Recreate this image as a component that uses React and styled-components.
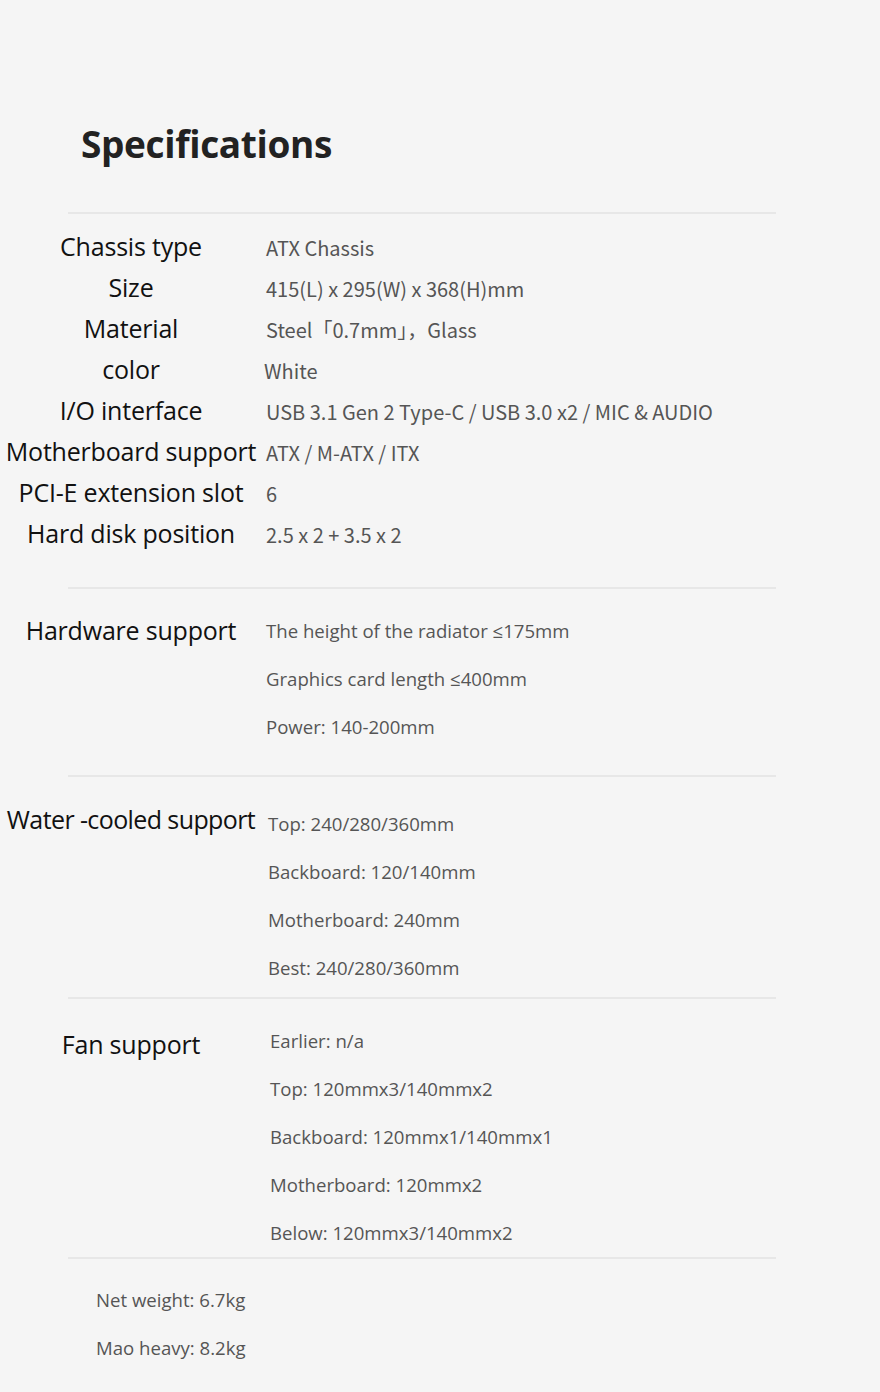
import React from 'react';
import styled, { createGlobalStyle } from 'styled-components';

const GlobalStyle = createGlobalStyle`
  html, body {
    margin: 0;
    padding: 0;
    background: #f5f5f5;
  }
`;

const Page = styled.div`
  width: 880px;
  min-height: 1392px;
  background: #f5f5f5;
  font-family: "Open Sans", "Noto Sans", sans-serif;
  overflow: hidden;
`;

const Title = styled.h1`
  margin: 0;
  padding: 119px 0 0 81px;
  height: 212px;
  box-sizing: border-box;
  font-family: "Open Sans", "Noto Sans", sans-serif;
  font-weight: 700;
  font-size: 37px;
  line-height: 50px;
  letter-spacing: -0.35px;
  color: #222;
`;

const Divider = styled.hr`
  margin: 0 104px 0 68px;
  border: none;
  height: 2px;
  background: #e7e7e7;
`;

const SpecList = styled.div`
  padding: 13px 0 32px;
`;

const SpecRow = styled.div`
  display: grid;
  grid-template-columns: 262px 1fr;
  align-items: center;
  height: 41px;
`;

const Label = styled.div`
  text-align: center;
  font-size: 25px;
  color: #111;
  white-space: nowrap;
  letter-spacing: -0.2px;
  transform: translateY(${p => p.$shift || 0}px);
`;

const Value = styled.div`
  padding-left: ${p => p.$indent || 4}px;
  font-family: "Noto Sans CJK SC", "Noto Sans", sans-serif;
  font-size: 20px;
  color: #555;
  white-space: nowrap;
`;

const Group = styled.div`
  display: grid;
  grid-template-columns: 262px 1fr;
  align-items: start;
  padding: ${p => p.$top}px 0 ${p => p.$bottom}px;
`;

const Lines = styled.div`
  display: flex;
  flex-direction: column;
  padding-left: ${p => p.$indent}px;
`;

const Line = styled.div`
  height: 48px;
  line-height: 48px;
  font-size: 18.6px;
  color: #555;
  white-space: nowrap;
`;

const GroupLabel = styled(Label)`
  line-height: 48px;
  letter-spacing: ${p => p.$tight ? '-0.6px' : '-0.2px'};
`;

const specs = [
  ['Chassis type', 'ATX Chassis', 4],
  ['Size', '415(L) x 295(W) x 368(H)mm', 4],
  ['Material', 'Steel「0.7mm」，Glass', 0],
  ['color', 'White', 2],
  ['I/O interface', 'USB 3.1 Gen 2 Type-C / USB 3.0 x2 / MIC & AUDIO', 4],
  ['Motherboard support', 'ATX / M-ATX / ITX', 4],
  ['PCI-E extension slot', '6', 4],
  ['Hard disk position', '2.5 x 2 + 3.5 x 2', 4],
];

const groups = [
  {
    label: 'Hardware support',
    lines: ['The height of the radiator ≤175mm', 'Graphics card length ≤400mm', 'Power: 140-200mm'],
    top: 18, bottom: 24, indent: 4, shift: -1,
  },
  {
    label: 'Water -cooled support',
    lines: ['Top: 240/280/360mm', 'Backboard: 120/140mm', 'Motherboard: 240mm', 'Best: 240/280/360mm'],
    top: 23, bottom: 5, indent: 6, shift: -5, tight: true,
  },
  {
    label: 'Fan support',
    lines: ['Earlier: n/a', 'Top: 120mmx3/140mmx2', 'Backboard: 120mmx1/140mmx1', 'Motherboard: 120mmx2', 'Below: 120mmx3/140mmx2'],
    top: 18, bottom: 0, indent: 8, shift: 3,
  },
];

const Footer = styled.div`
  padding: 17px 0 0 96px;
`;

export default function App() {
  return (
    <Page>
      <GlobalStyle />
      <Title>Specifications</Title>
      <Divider />
      <SpecList>
        {specs.map(([label, value, indent]) => (
          <SpecRow key={label}>
            <Label $shift={-2}>{label}</Label>
            <Value $indent={indent}>{value}</Value>
          </SpecRow>
        ))}
      </SpecList>
      {groups.map(g => (
        <React.Fragment key={g.label}>
          <Divider />
          <Group $top={g.top} $bottom={g.bottom}>
            <GroupLabel $shift={g.shift} $tight={g.tight}>{g.label}</GroupLabel>
            <Lines $indent={g.indent}>
              {g.lines.map(l => <Line key={l}>{l}</Line>)}
            </Lines>
          </Group>
        </React.Fragment>
      ))}
      <Divider />
      <Footer>
        <Line>Net weight: 6.7kg</Line>
        <Line>Mao heavy: 8.2kg</Line>
      </Footer>
    </Page>
  );
}
